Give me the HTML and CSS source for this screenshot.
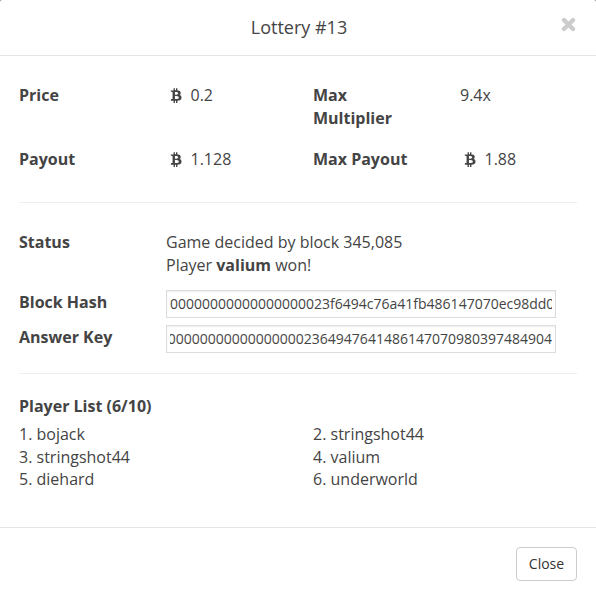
FILE: index.html
```html
<!DOCTYPE html>
<html lang="en">
<head>
    <meta charset="UTF-8">
    <meta name="viewport" content="width=device-width, initial-scale=1.0">
    <title>Lottery #13</title>
    <link rel="stylesheet" href="styles.css">
</head>
<body>

<!-- Bitcoin icon, reused by every amount -->
<svg class="sprite" width="0" height="0">
    <symbol id="btc" viewBox="0 0 1280 1792">
        <path d="M1167 640q18 182-131 258 117 28 175 103t45 214q-7 71-32.500 125t-64.500 89-97 58.500-121.500 34.500-145.500 15v255h-154v-251q-80 0-122-1v252h-154v-255q-18 0-54-.5t-55-.5h-200l31-183h111q50 0 58-51v-402h16q-6-1-16-1v-287q-13-68-89-68h-111v-164l212 1q64 0 97-1v-252h154v247q82-2 122-2v-245h154v252q79 7 140 22.500t113 45 82.500 78 36.500 114.500zm-215 545q0-36-15-64t-37-46-57.500-30.500-65.500-18.500-74-9-69-3-64.500 1-47.500 1v338q8 0 37 .5t48 .5 53-1.500 58.500-4 57-8.500 55.500-14 47.500-21 39.500-30 24.500-40 9.500-51zm-71-476q0-33-12.500-58.500t-30.500-42-48-28-55-16.500-61.500-8-58-2.500-54 1-39.500.5v307q5 0 34.500.5t46.500 0 50-2 55-5.500 51.500-11 48.500-18.500 37-27 27-38.500 9-51z"/>
    </symbol>
</svg>

<div class="modal">
    <div class="modal-header">
        <h4 class="modal-title">Lottery #13</h4>
        <button class="close-btn" aria-label="Close">
            <svg width="15" height="15" viewBox="0 0 15 15"><path d="M3 3l9 9M12 3l-9 9"/></svg>
        </button>
    </div>

    <div class="modal-body">
        <div class="row stats">
            <strong>Price</strong>
            <span><svg class="btc"><use href="#btc"/></svg>0.2</span>
            <strong>Max Multiplier</strong>
            <span>9.4x</span>
        </div>
        <div class="row">
            <strong>Payout</strong>
            <span><svg class="btc"><use href="#btc"/></svg>1.128</span>
            <strong>Max Payout</strong>
            <span><svg class="btc"><use href="#btc"/></svg>1.88</span>
        </div>

        <hr class="first">

        <div class="row status">
            <strong>Status</strong>
            <div class="wide">Game decided by block 345,085<br>Player <strong>valium</strong> won!</div>
        </div>
        <div class="row field">
            <strong>Block Hash</strong>
            <input class="wide" type="text" readonly value="00000000000000000023f6494c76a41fb486147070ec98dd09b2">
        </div>
        <div class="row field">
            <strong>Answer Key</strong>
            <input class="wide key" type="text" readonly value="0000000000000000002364947641486147070980397484904">
        </div>

        <hr class="second">

        <strong class="list-title">Player List (6/10)</strong>
        <div class="players">
            <span>1. bojack</span>
            <span>2. stringshot44</span>
            <span>3. stringshot44</span>
            <span>4. valium</span>
            <span>5. diehard</span>
            <span>6. underworld</span>
        </div>
    </div>

    <div class="modal-footer">
        <button class="btn">Close</button>
    </div>
</div>

</body>
</html>
```
FILE: styles.css
```css
body {
    margin: 0;
    background-color: #7f7f7f;
    font-family: "Open Sans", sans-serif;
    font-size: 16px;
    line-height: 23px;
    color: #444;
}
.sprite {
    display: none;
}
.modal {
    box-sizing: border-box;
    height: 599px;
    background-color: #fff;
    border-radius: 2px 2px 0 0;
    overflow: hidden;
}
.modal-header {
    position: relative;
    height: 55px;
    border-bottom: 1px solid #e5e5e5;
    display: flex;
    justify-content: center;
    align-items: center;
}
.modal-title {
    margin: 0 0 0 2px;
    font-size: 18px;
    font-weight: 400;
}
.close-btn {
    position: absolute;
    top: 17px;
    right: 20px;
    padding: 0;
    border: none;
    background: none;
    cursor: pointer;
}
.close-btn svg {
    display: block;
    fill: none;
    stroke: #ccc;
    stroke-width: 4.4;
    stroke-linecap: round;
}
.modal-body {
    box-sizing: border-box;
    height: 471px;
    padding: 28px 19px 0;
}
.row {
    display: grid;
    grid-template-columns: repeat(4, 147px);
}
.row strong {
    font-weight: 700;
}
.stats {
    margin-bottom: 18px;
}
.stats strong {
    padding-right: 40px;
}
.wide {
    grid-column: 2 / 5;
}
.btc {
    width: 12px;
    height: 16px;
    margin: 0 8.500px 0 4px;
    fill: #444;
    vertical-align: -2px;
}
hr {
    height: 1px;
    border: none;
    background-color: #eee;
}
hr.first {
    margin: 31px 0 28px;
}
hr.second {
    margin: 13px 0 21px;
}
.status {
    margin-bottom: 13px;
}
.field {
    height: 35px;
}
.field strong {
    padding-top: 1px;
}
input {
    box-sizing: border-box;
    width: 390px;
    height: 28px;
    padding: 0 3px 2px;
    border: 1px solid #ddd;
    box-shadow: inset 0 1px 2px rgba(0, 0, 0, 0.07);
    font-family: inherit;
    font-size: 14px;
    color: #444;
}
/* keeps the end of the key in view */
input.key {
    direction: rtl;
}
.list-title {
    display: block;
    margin-bottom: 5px;
}
.players {
    display: grid;
    grid-template-columns: 294px 264px;
    line-height: 22.500px;
}
.modal-footer {
    height: 72px;
    box-sizing: border-box;
    padding: 19px 19px 0;
    border-top: 1px solid #e5e5e5;
    display: flex;
    justify-content: flex-end;
    align-items: flex-start;
}
.btn {
    width: 61px;
    height: 34px;
    padding: 0 0 2px;
    background-color: #fff;
    border: 1px solid #ccc;
    border-radius: 4px;
    font-family: inherit;
    font-size: 14px;
    color: #333;
    cursor: pointer;
}
```
